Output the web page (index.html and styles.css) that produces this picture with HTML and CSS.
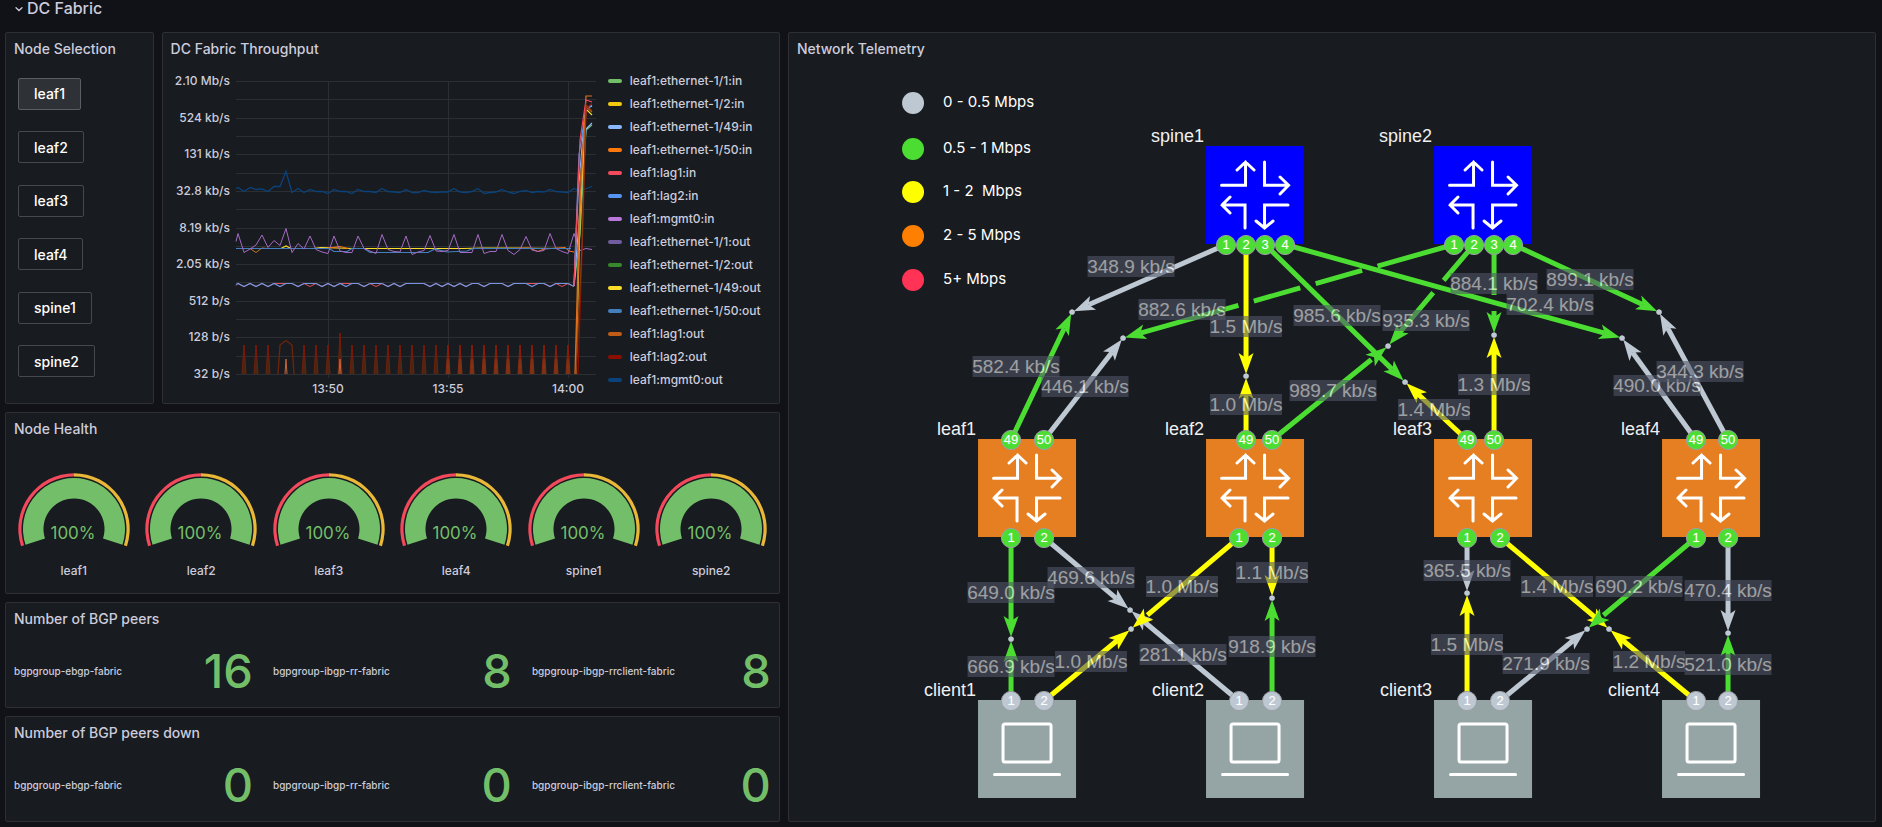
FILE: index.html
```html
<!DOCTYPE html>
<html lang="en">
<head>
<meta charset="utf-8">
<title>DC Fabric</title>
<link rel="stylesheet" href="styles.css">
</head>
<body>
<main class="dashboard">
  <h1 class="row-title">
    <button class="row-toggle" type="button" aria-expanded="true">
      <svg class="chevron" viewBox="0 0 10 10" aria-hidden="true"><path d="M2 3.8 5 6.6 8 3.8"/></svg>
      <span>DC Fabric</span>
    </button>
  </h1>

  <div class="panels">
    <section class="panel panel-selection">
      <h2 class="panel-title">Node Selection</h2>
      <div class="panel-body node-buttons">
        <button class="node-button is-active" type="button">leaf1</button>
        <button class="node-button" type="button">leaf2</button>
        <button class="node-button" type="button">leaf3</button>
        <button class="node-button" type="button">leaf4</button>
        <button class="node-button" type="button">spine1</button>
        <button class="node-button" type="button">spine2</button>
      </div>
    </section>

    <section class="panel panel-throughput">
      <h2 class="panel-title">DC Fabric Throughput</h2>
      <div class="panel-body throughput">
        <svg class="chart" id="chart" viewBox="0 0 438 338" preserveAspectRatio="xMinYMin meet" role="img" aria-label="DC Fabric Throughput"></svg>
        <ul class="legend" id="legend"></ul>
      </div>
    </section>

    <section class="panel panel-health">
      <h2 class="panel-title">Node Health</h2>
      <div class="panel-body gauges" id="gauges"></div>
    </section>

    <section class="panel panel-peers">
      <h2 class="panel-title">Number of BGP peers</h2>
      <dl class="panel-body stats">
        <div class="stat"><dt>bgpgroup-ebgp-fabric</dt><dd>16</dd></div>
        <div class="stat"><dt>bgpgroup-ibgp-rr-fabric</dt><dd>8</dd></div>
        <div class="stat"><dt>bgpgroup-ibgp-rrclient-fabric</dt><dd>8</dd></div>
      </dl>
    </section>

    <section class="panel panel-peers-down">
      <h2 class="panel-title">Number of BGP peers down</h2>
      <dl class="panel-body stats">
        <div class="stat"><dt>bgpgroup-ebgp-fabric</dt><dd>0</dd></div>
        <div class="stat"><dt>bgpgroup-ibgp-rr-fabric</dt><dd>0</dd></div>
        <div class="stat"><dt>bgpgroup-ibgp-rrclient-fabric</dt><dd>0</dd></div>
      </dl>
    </section>

    <section class="panel panel-telemetry">
      <h2 class="panel-title">Network Telemetry</h2>
      <div class="panel-body">
        <svg class="topology" id="topology" viewBox="0 0 1086 756" role="img" aria-label="Network Telemetry"></svg>
      </div>
    </section>
  </div>
</main>
<script src="dashboard.js"></script>
</body>
</html>
```

FILE: styles.css
```css
* {
  box-sizing: border-box;
}

body {
  margin: 0;
  background: #111217;
  color: #ccccdc;
  font-family: Inter, Roboto, sans-serif;
  font-size: 14px;
}

button {
  font: inherit;
  color: inherit;
  background: none;
  border: 0;
  padding: 0;
  cursor: pointer;
}

.dashboard {
  padding: 0 6px 5px 5px;
}

.row-title {
  margin: 0;
  height: 32px;
  font-size: 16px;
  font-weight: 500;
  line-height: 16px;
}

.row-toggle {
  display: flex;
  align-items: center;
  gap: 3px;
  margin-left: 9px;
}

.chevron {
  width: 10px;
  height: 10px;
  margin-top: 2px;
  fill: none;
  stroke: #ccccdc;
  stroke-width: 1.3;
  stroke-linecap: round;
}

/* 24-column dashboard grid */
.panels {
  display: grid;
  grid-template-columns: repeat(24, minmax(0, 1fr));
  grid-auto-rows: 30px;
  gap: 8px;
}

.panel {
  display: flex;
  flex-direction: column;
  min-width: 0;
  background: #181b1f;
  border: 1px solid #2d2f34;
  border-radius: 2px;
}

.panel-selection { grid-column: 1 / span 2; grid-row: 1 / span 10; }
.panel-throughput { grid-column: 3 / span 8; grid-row: 1 / span 10; }
.panel-health { grid-column: 1 / span 10; grid-row: 11 / span 5; }
.panel-peers { grid-column: 1 / span 10; grid-row: 16 / span 3; }
.panel-peers-down { grid-column: 1 / span 10; grid-row: 19 / span 3; }
.panel-telemetry { grid-column: 11 / span 14; grid-row: 1 / span 21; }

.panel-title {
  margin: 0;
  padding: 0 8px;
  font-size: 14px;
  font-weight: 500;
  line-height: 32px;
  white-space: nowrap;
}

.panel-body {
  flex: 1;
  min-height: 0;
  margin: 0;
}

/* Node selection */
.node-buttons {
  display: grid;
  grid-auto-rows: 1fr;
  align-items: center;
  justify-items: start;
  padding: 2px 12px 15px;
}

.node-button {
  height: 32px;
  padding: 0 15px;
  border: 1px solid #46484d;
  border-radius: 2px;
  color: #fff;
  font-weight: 500;
}

.node-button.is-active {
  background: #2e3136;
  border-color: #5b5d62;
}

/* Throughput */
.throughput {
  display: flex;
}

.chart {
  flex: 1;
  min-width: 0;
  height: 100%;
}

.grid-line {
  stroke: #2b2e32;
  fill: none;
}

.axis-text {
  fill: #ccccdc;
  font-size: 12px;
  font-weight: 500;
}

.series {
  fill: none;
}

.legend {
  flex: none;
  margin: 0;
  padding: 4px 18px 0 6px;
  list-style: none;
  font-size: 12px;
  font-weight: 500;
  line-height: 23px;
}

.legend-item {
  display: flex;
  align-items: center;
  gap: 8px;
}

.swatch {
  width: 14px;
  height: 4px;
  border-radius: 2px;
}

/* Node health */
.gauges {
  display: grid;
  grid-template-columns: repeat(6, 1fr);
  gap: 8px;
  padding: 0 8px;
}

.gauge {
  display: flex;
  flex-direction: column;
  align-items: center;
  margin: 0;
  padding-top: 26px;
  font-size: 12px;
  font-weight: 500;
}

.gauge svg {
  width: 116px;
  height: 78px;
}

.gauge figcaption {
  line-height: 20px;
  margin-top: 12px;
}

.gauge-value {
  fill: #73bf69;
  font-size: 17px;
  font-weight: 400;
  text-anchor: middle;
}

/* BGP stats */
.stats {
  display: grid;
  grid-template-columns: repeat(3, 1fr);
  gap: 20px;
  padding: 0 8px;
}

.stat {
  display: flex;
  align-items: center;
  justify-content: space-between;
  white-space: nowrap;
}

.stat dt {
  font-size: 10px;
  font-weight: 500;
}

.stat dd {
  margin: 0;
  color: #73bf69;
  font-size: 47px;
  font-weight: 500;
  line-height: 48px;
}

/* Topology */
.topology {
  display: block;
  width: 100%;
  height: 100%;
  font-family: "Liberation Sans", Arial, sans-serif;
}

.scale-text {
  fill: #fff;
  font-family: Inter, sans-serif;
  font-size: 15px;
}

.node-label {
  fill: #f0f0f0;
  font-size: 18px;
  text-anchor: end;
}

.node-icon {
  fill: none;
  stroke: #fff;
  stroke-width: 3;
  stroke-linecap: round;
}

.port {
  stroke: #9c9fa5;
}

.port-text {
  fill: #fff;
  font-size: 13px;
  text-anchor: middle;
  stroke: #fff;
  stroke-opacity: 0.15;
}

.rate {
  opacity: 0.58;
}

.rate rect {
  fill: #52576a;
}

.rate text {
  fill: #fff;
  font-size: 19px;
  text-anchor: middle;
}
```

FILE: dashboard.js
```js
const legend = [
  ["leaf1:ethernet-1/1:in", "#73bf69"],
  ["leaf1:ethernet-1/2:in", "#f2cc0c"],
  ["leaf1:ethernet-1/49:in", "#8ab8ff"],
  ["leaf1:ethernet-1/50:in", "#ff780a"],
  ["leaf1:lag1:in", "#f2495c"],
  ["leaf1:lag2:in", "#5794f2"],
  ["leaf1:mgmt0:in", "#b877d9"],
  ["leaf1:ethernet-1/1:out", "#705da0"],
  ["leaf1:ethernet-1/2:out", "#37872d"],
  ["leaf1:ethernet-1/49:out", "#fade2a"],
  ["leaf1:ethernet-1/50:out", "#447ebc"],
  ["leaf1:lag1:out", "#c15c17"],
  ["leaf1:lag2:out", "#890f02"],
  ["leaf1:mgmt0:out", "#0a437c"]
];

document.getElementById("legend").innerHTML = legend.map(([name, color]) =>
  `<li><button type="button" class="legend-item"><span class="swatch" style="background:${color}"></span>${name}</button></li>`
).join("");

/* ---- Throughput chart ---- */
const chartParts = [];
const plot = { left: 73, right: 433, top: 16, bottom: 309 };
const step = (plot.bottom - plot.top) / 16;
const yLabels = ["2.10 Mb/s", "524 kb/s", "131 kb/s", "32.8 kb/s", "8.19 kb/s", "2.05 kb/s", "512 b/s", "128 b/s", "32 b/s"];

for (let i = 0; i <= 16; i++) {
  const y = Math.round(plot.top + i * step) + 0.5;
  chartParts.push(`<path class="grid-line" d="M${plot.left} ${y}H${plot.right}"/>`);
  if (i % 2 === 0) {
    chartParts.push(`<text class="axis-text" x="67" y="${Math.round(y + 3)}" text-anchor="end">${yLabels[i / 2]}</text>`);
  }
}
[["13:50", 165], ["13:55", 285], ["14:00", 405]].forEach(([label, x]) => {
  chartParts.push(`<path class="grid-line" d="M${x + 0.5} ${plot.top}V${plot.bottom + 4}"/>`);
  chartParts.push(`<text class="axis-text" x="${x}" y="328" text-anchor="middle">${label}</text>`);
});

/* One sample every 6px; the first falls just inside the left edge. */
const sampleX = i => 75 + i * 6;
const line = (points, color, extra = "") =>
  `<polyline class="series" stroke="${color}" ${extra} points="${points.map(p => p.join(",")).join(" ")}"/>`;
const sampled = (start, values) => [[73, start], ...values.map((v, i) => [sampleX(i), v])];

const spikes = [];
[1, 3, 5, 11, 13, 15].forEach(i => spikes.push([i, 280]));
spikes.push([17, 268]);
for (let i = 19; i <= 55; i += 2) spikes.push([i, 280]);
spikes.forEach(([i, top]) => {
  const x = sampleX(i);
  const late = i >= 35;
  chartParts.push(`<path d="M${x - 2} ${plot.bottom}L${x} ${top}L${x + 2} ${plot.bottom}" fill="${late ? "#7a3414" : "#4a2512"}" stroke="${late ? "#8a2b10" : "#6c230c"}"/>`);
  chartParts.push(`<path d="M${x} ${top}V${top + 14}" stroke="#890f02"/>`);
});
chartParts.push(line([[115, 309], [117, 280], [123, 275.5], [129, 280], [131, 309]], "#6c230c", 'stroke-width="1.4"'));
[123, 177].forEach(x => chartParts.push(line([[x - 1, 309], [x, 294], [x + 1, 309]], "#c9663a")));

const yellow = 183.5;
chartParts.push(line([[73, yellow], [118, yellow], [123, 181], [128, yellow], [150, yellow], [158, 182.5], [190, yellow], [203, yellow], [300, yellow], [320, 183], [400, yellow]], "#fade2a", 'stroke-width="1.2"'));
chartParts.push(line([[87, yellow], [93, 187.5], [99, 183], [104, yellow]], "#c9721f"));
chartParts.push(line([[165, 183], [177, 181.5], [185, yellow]], "#ff780a"));
chartParts.push(line([[345, yellow], [366, 183], [375, 186.5], [381, 184], [402, 182.5], [406, 186], [411, 187]], "#ff780a"));
chartParts.push(line([[73, yellow], [150, yellow], [166, yellow], [171, 186.5], [184, 186.5], [189, yellow], [201, yellow], [207, 187.5], [265, 187.5], [272, 184], [284, 187], [304, 186], [310, yellow], [408, yellow]], "#447ebc", 'stroke-width="1.2"'));

const mgmtIn = sampled(176.5, [168.5,187.5,184,180,170,182.5,175.5,180.5,163.5,187.5,178.5,184,171,184.5,187,188.5,171,186,187.5,187.5,171,183.5,186,188.5,169.5,184.5,186.5,187,171,189.5,187,185.5,170.5,186,186.5,185.5,169.5,187.5,187.5,187.5,169.5,188.5,186.5,186.5,169.5,185.5,189.5,184.5,171.5,185,186.5,185.5,168.5,183.5,186.5,188.5,168.5,185.5,183.5,184.5]);
chartParts.push(line(mgmtIn, "#a56ac4"));
const mgmtOut = sampled(123.5, [122.5,126.5,122.5,124.5,124,126.5,121.5,121.5,106.5,127.5,123.5,127.5,124.5,126.5,126.5,128.5,124.5,126.5,126.5,128.5,124.5,126.5,126.5,127.5,123.5,126.5,127,127.5,124.5,127.5,127.5,125.5,127,127.5,127,127,123.5,127,127.5,126.5,123.5,128.5,127.5,127,124.5,127,128.5,126.5,125.5,127.5,126.5,127,124.5,126.5,127,127.5,123.5,126.5,123.5,121.5]);
chartParts.push(line(mgmtOut, "#0a437c", 'stroke-width="1.3"'));

/* lag traffic idles flat with short dips */
const dips = [1, 3, 5, 7, 10, 14, 16, 18, 21, 25, 27, 32, 34, 36, 38, 41, 45, 49, 52, 56];
const redDips = [1, 3, 5, 10, 12, 14, 16, 21, 23, 25, 27, 32, 34, 36, 38, 41, 45, 52, 54, 56];
const idle = (start, list) => sampled(start, Array.from({ length: 57 }, (_, i) => list.includes(i) ? 221.5 : 218.5));
chartParts.push(line(idle(220.5, redDips), "#e0525c"));
chartParts.push(line(idle(219.5, dips), "#7393e0", 'stroke-width="1.2"'));

/* Traffic ramp after 14:00 */
[
  [[[411, 221], [415, 130], [421, 58], [423, 44], [429, 41]], "#8ab8ff"],
  [[[411, 221], [417, 170], [423, 65], [429, 60]], "#73bf69"],
  [[[411, 221], [415, 170], [423, 64], [429, 58]], "#8ab8ff"],
  [[[413, 309], [417, 150], [423, 44], [429, 50]], "#fade2a"],
  [[[413, 309], [417, 120], [423, 42], [429, 47]], "#c15c17"],
  [[[411, 221], [416, 90], [423, 44], [429, 40]], "#5794f2"],
  [[[415, 309], [420, 160], [423, 44], [429, 38]], "#890f02"],
  [[[412, 309], [416, 160], [423, 31], [429, 31]], "#e0701c"],
  [[[411, 221], [417, 75], [423, 35], [429, 37]], "#f2495c"],
  [[[413, 309], [419, 180], [423, 40], [429, 46]], "#8a3c12"]
].forEach(([points, color]) => chartParts.push(line(points, color, 'stroke-width="1.2"')));
document.getElementById("chart").innerHTML = chartParts.join("");

/* ---- Gauges ---- */
const polar = (r, deg) => {
  const a = deg * Math.PI / 180;
  return `${(58 + r * Math.sin(a)).toFixed(2)} ${(58 - r * Math.cos(a)).toFixed(2)}`;
};
const band = (r1, r2, from, to, color) => {
  const large = to - from > 180 ? 1 : 0;
  return `<path fill="${color}" d="M${polar(r1, from)}A${r1} ${r1} 0 ${large} 1 ${polar(r1, to)}L${polar(r2, to)}A${r2} ${r2} 0 ${large} 0 ${polar(r2, from)}Z"/>`;
};
document.getElementById("gauges").innerHTML = ["leaf1", "leaf2", "leaf3", "leaf4", "spine1", "spine2"].map(name => `
  <figure class="gauge">
    <svg viewBox="0 0 116 78" role="img" aria-label="${name} health 100%">
      ${band(55.7, 52.5, -108, 0, "#f2495c")}${band(55.7, 52.5, 0, 108, "#eab839")}
      ${band(51, 30.5, -108, 108, "#73bf69")}
      <text class="gauge-value" x="57" y="68">100%</text>
    </svg>
    <figcaption>${name}</figcaption>
  </figure>`).join("");

/* ---- Topology ---- */
const GRAY = "#bec8d2", GREEN = "#4cdd33", YELLOW = "#ffff00";
const nodes = {
  spine1: { x: 417, y: 81, fill: "#0000ff", bottom: [[1, 20], [2, 40], [3, 59], [4, 79]] },
  spine2: { x: 645, y: 81, fill: "#0000ff", bottom: [[1, 20], [2, 40], [3, 60], [4, 79]] },
  leaf1: { x: 189, y: 374, fill: "#e67f22", top: [[49, 33], [50, 66]], bottom: [[1, 33], [2, 66]] },
  leaf2: { x: 417, y: 374, fill: "#e67f22", top: [[49, 40], [50, 66]], bottom: [[1, 33], [2, 66]] },
  leaf3: { x: 645, y: 374, fill: "#e67f22", top: [[49, 33], [50, 60]], bottom: [[1, 33], [2, 66]] },
  leaf4: { x: 873, y: 374, fill: "#e67f22", top: [[49, 34], [50, 66]], bottom: [[1, 34], [2, 66]] },
  client1: { x: 189, y: 635, fill: "#95a5a5", client: true, top: [[1, 33], [2, 66]] },
  client2: { x: 417, y: 635, fill: "#95a5a5", client: true, top: [[1, 33], [2, 66]] },
  client3: { x: 645, y: 635, fill: "#95a5a5", client: true, top: [[1, 33], [2, 66]] },
  client4: { x: 873, y: 635, fill: "#95a5a5", client: true, top: [[1, 34], [2, 66]] }
};
const SIZE = 98;
const portPoint = ref => {
  const [name, port] = ref.split(".");
  const n = nodes[name];
  const top = (n.top || []).find(p => p[0] === +port);
  if (top) return [n.x + top[1], n.y + 1];
  return [n.x + n.bottom.find(p => p[0] === +port)[1], n.y + SIZE + 0.5];
};

/* port, meeting point, colour, rate text, rate centre, centres of line jumps */
const links = [
  ["spine1.1", [283, 247], GRAY, "348.9 kb/s", [342, 201]],
  ["leaf1.49", [283, 247], GREEN, "582.4 kb/s", [227, 301]],
  ["spine1.2", [457, 311], YELLOW, "1.5 Mb/s", [457, 261]],
  ["leaf2.49", [457, 311], YELLOW, "1.0 Mb/s", [457, 339]],
  ["spine1.3", [616, 317], GREEN, "985.6 kb/s", [548, 250]],
  ["leaf3.49", [616, 317], YELLOW, "1.4 Mb/s", [645, 344]],
  ["spine1.4", [833, 273], GREEN, "702.4 kb/s", [761, 239]],
  ["leaf4.49", [833, 273], GRAY, "490.0 kb/s", [868, 320]],
  ["spine2.1", [334, 273], GREEN, "882.6 kb/s", [393, 244], [[581, 204], [519, 221], [457, 238]]],
  ["leaf1.50", [334, 273], GRAY, "446.1 kb/s", [296, 321]],
  ["spine2.2", [599, 281], GREEN, "935.3 kb/s", [637, 255], [[650, 222]]],
  ["leaf2.50", [599, 281], GREEN, "989.7 kb/s", [544, 325], [[589, 290]]],
  ["spine2.3", [705, 270], GREEN, "884.1 kb/s", [705, 218], [[705, 238]]],
  ["leaf3.50", [705, 270], YELLOW, "1.3 Mb/s", [705, 319]],
  ["spine2.4", [870, 247], GREEN, "899.1 kb/s", [801, 214]],
  ["leaf4.50", [870, 247], GRAY, "344.3 kb/s", [911, 306]],
  ["leaf1.1", [222, 574], GREEN, "649.0 kb/s", [222, 527]],
  ["client1.1", [222, 574], GREEN, "666.9 kb/s", [222, 601]],
  ["leaf1.2", [341, 545], GRAY, "469.6 kb/s", [302, 512]],
  ["client2.1", [341, 545], GRAY, "281.1 kb/s", [394, 589]],
  ["leaf2.1", [342, 564], YELLOW, "1.0 Mb/s", [393, 521], [[352, 555]]],
  ["client1.2", [342, 564], YELLOW, "1.0 Mb/s", [302, 596]],
  ["leaf2.2", [483, 533], YELLOW, "1.1 Mb/s", [483, 507]],
  ["client2.2", [483, 533], GREEN, "918.9 kb/s", [483, 581]],
  ["leaf3.1", [678, 528], GRAY, "365.5 kb/s", [678, 505]],
  ["client3.1", [678, 528], YELLOW, "1.5 Mb/s", [678, 579]],
  ["leaf3.2", [820, 564], YELLOW, "1.4 Mb/s", [768, 521]],
  ["client4.1", [820, 564], YELLOW, "1.2 Mb/s", [860, 596]],
  ["leaf4.1", [798, 564], GREEN, "690.2 kb/s", [850, 521], [[808, 555]]],
  ["client3.2", [798, 564], GRAY, "271.9 kb/s", [757, 598]],
  ["leaf4.2", [939, 568], GRAY, "470.4 kb/s", [939, 525]],
  ["client4.2", [939, 568], GREEN, "521.0 kb/s", [939, 599]]
];

const topo = [];

[
  ["0 - 0.5 Mbps", "#bec8d2", 38], ["0.5 - 1 Mbps", "#4cdd33", 84], ["1 - 2\u00a0 Mbps", "#ffff00", 127],
  ["2 - 5 Mbps", "#ff8000", 171], ["5+ Mbps", "#ff3355", 215]
].forEach(([label, color, y]) => {
  topo.push(`<circle cx="124" cy="${y}" r="11" fill="${color}"/>`);
  topo.push(`<text class="scale-text" x="154" y="${y + 4}">${label}</text>`);
});

const routerIcon = "M15.5 39.3H39.5V16M31 24 39.5 16 48 24M58.5 16V39.3H82M74 31 82.5 39.3 74 48M39 82V59H16M24 51 16 59 24 67M82 59H58.5V82M50 75 58.5 82 67 75";
const clientIcon = "M27 24H71Q73 24 73 26V60Q73 62 71 62H27Q25 62 25 60V26Q25 24 27 24ZM16.5 74.5H81.5";

Object.entries(nodes).forEach(([name, n]) => {
  topo.push(`<rect x="${n.x}" y="${n.y}" width="${SIZE}" height="${SIZE}" fill="${n.fill}"/>`);
  topo.push(`<path class="node-icon" transform="translate(${n.x} ${n.y})" d="${n.client ? clientIcon : routerIcon}"/>`);
  topo.push(`<text class="node-label" x="${n.x - 2}" y="${n.y - 4}">${name}</text>`);
});

links.forEach(([ref, [mx, my], color, , , jumps = []]) => {
  const [px, py] = portPoint(ref);
  const length = Math.hypot(mx - px, my - py);
  const angle = Math.atan2(my - py, mx - px) * 180 / Math.PI;
  const cuts = jumps.map(([x, y]) => Math.hypot(x - px, y - py)).sort((a, b) => a - b);
  let from = 0, d = "";
  cuts.forEach(c => { d += `M${from} 0H${c - 8}`; from = c + 8; });
  if (from < length - 18) d += `M${from} 0H${length - 18}`;
  topo.push(`<g transform="translate(${px} ${py}) rotate(${angle})"><path d="${d}" stroke="${color}" stroke-width="5"/><path d="M${length - 2} 0l-21 -7.5 5 7.5 -5 7.5z" fill="${color}"/></g>`);
});
links.forEach(([, [mx, my]]) => topo.push(`<circle cx="${mx}" cy="${my}" r="2.6" fill="${GRAY}"/>`));

Object.values(nodes).forEach(n => {
  const color = n.client ? GRAY : GREEN;
  const ports = (n.top || []).map(([p, x]) => [p, n.x + x, n.y + 1])
    .concat((n.bottom || []).map(([p, x]) => [p, n.x + x, n.y + SIZE + 1]));
  ports.forEach(([p, x, y]) => {
    topo.push(`<circle class="port" cx="${x}" cy="${y}" r="9.6" fill="${color}"/>`);
    topo.push(`<text class="port-text" x="${x}" y="${y + 4}">${p}</text>`);
  });
});

links.forEach(([, , , text, [x, y]]) => {
  const width = text.includes("kb") ? 87 : 72;
  topo.push(`<g class="rate"><rect x="${x - width / 2}" y="${y - 10}" width="${width}" height="21"/><text x="${x}" y="${y + 7}">${text}</text></g>`);
});
document.getElementById("topology").innerHTML = topo.join("");
```
